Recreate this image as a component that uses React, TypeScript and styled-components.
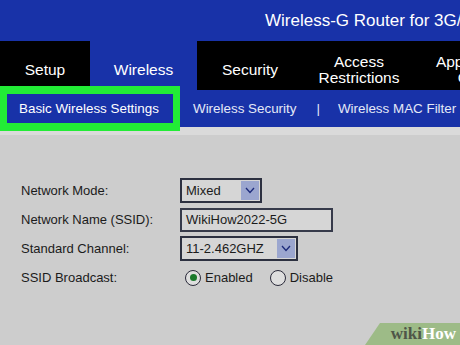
import React from "react";
import styled, { createGlobalStyle } from "styled-components";

const blue = "#1832a8";

const GlobalStyle = createGlobalStyle`
  html, body {
    margin: 0;
    padding: 0;
    background: #cdcdcd;
    overflow: hidden;
  }
  body {
    font-family: "Liberation Sans", Arial, sans-serif;
  }
`;

const Page = styled.div`
  width: 460px;
  height: 345px;
  position: relative;
  overflow: hidden;
  background: #cdcdcd;
`;

const Header = styled.header`
  height: 41px;
  background: ${blue};
  display: flex;
  align-items: center;
  padding-left: 265px;
  color: #ffffff;
  font-size: 17px;
  white-space: nowrap;
`;

const Nav = styled.nav`
  height: 49px;
  background: #000;
  display: flex;
`;

const Tab = styled.div<{ $w: number; $active?: boolean }>`
  flex: 0 0 ${(p) => p.$w}px;
  display: flex;
  align-items: center;
  justify-content: center;
  padding-top: 9px;
  box-sizing: border-box;
  background: ${(p) => (p.$active ? blue : "transparent")};
  color: #ffffff;
  font-size: 15.5px;
  line-height: 16px;
  text-align: center;
  white-space: nowrap;
`;

const SubNav = styled.div`
  height: 37px;
  background: ${blue};
  display: flex;
  align-items: center;
  color: #e4e9f7;
  font-size: 13.4px;
  white-space: nowrap;
`;

const Highlight = styled.div`
  position: relative;
  z-index: 2;
  flex: 0 0 auto;
  width: 180px;
  height: 45px;
  box-sizing: border-box;
  border: 7px solid #22ec36;
  border-top-width: 8px;
  border-bottom-width: 8px;
  background: ${blue};
  display: flex;
  align-items: center;
  padding-left: 12px;
  color: #ffffff;
`;

const SubLink = styled.span<{ $ml: number }>`
  margin-left: ${(p) => p.$ml}px;
`;

const Band = styled.div`
  height: 8px;
  background: #dadada;
`;

const Form = styled.div`
  display: grid;
  grid-template-columns: 159px auto;
  grid-auto-rows: 29px;
  align-items: center;
  padding: 41px 0 0 21px;
  color: #1b1b1b;
  font-size: 13px;
`;

const Label = styled.div``;

const SelectBox = styled.div<{ $w: number; $h: number }>`
  width: ${(p) => p.$w}px;
  height: ${(p) => p.$h}px;
  box-sizing: border-box;
  border: 2px solid #2c3040;
  background: #d6d6d6;
  display: flex;
  align-items: center;
  justify-content: space-between;
  padding: 0 1px 0 4px;
`;

const DropButton = styled.div`
  width: 18px;
  height: 19px;
  background: #9ba6cf;
  display: flex;
  align-items: center;
  justify-content: center;
`;

const TextInput = styled.div`
  width: 153px;
  height: 24px;
  box-sizing: border-box;
  border: 2px solid #363a4a;
  background: #d6d6d6;
  display: flex;
  align-items: center;
  padding-left: 4px;
`;

const RadioGroup = styled.div`
  display: flex;
  align-items: center;
`;

const RadioCircle = styled.span<{ $on?: boolean }>`
  width: 16px;
  height: 16px;
  box-sizing: border-box;
  border: 1.5px solid #2a2a3a;
  border-radius: 50%;
  background: #dedede;
  display: inline-flex;
  align-items: center;
  justify-content: center;
  margin-left: 5px;
  &::after {
    content: "";
    width: 7px;
    height: 7px;
    border-radius: 50%;
    background: ${(p) => (p.$on ? "#1b7a2c" : "transparent")};
  }
`;

const RadioText = styled.span<{ $mr?: number }>`
  margin-left: 4px;
  margin-right: ${(p) => p.$mr || 0}px;
  font-size: 13px;
`;

const Watermark = styled.div`
  position: absolute;
  right: 0;
  bottom: 0;
  width: 95px;
  height: 22px;
  background: #9dbb87;
  clip-path: polygon(15px 0, 100% 0, 100% 100%, 0 100%);
  display: flex;
  align-items: center;
  justify-content: flex-end;
  padding-right: 4px;
  box-sizing: border-box;
  font-family: "Liberation Serif", "DejaVu Serif", serif;
  font-weight: bold;
  font-size: 17px;
`;

const Wiki = styled.span`
  color: #4f5648;
`;

const How = styled.span`
  color: #ffffff;
`;

function Chevron() {
  return (
    <svg width="10" height="7" viewBox="0 0 10 7">
      <polyline points="1,1 5,5.5 9,1" fill="none" stroke="#1c2a7a" strokeWidth="1.3" />
    </svg>
  );
}

function Select(props: { value: string; w: number; h: number }) {
  return (
    <SelectBox $w={props.w} $h={props.h}>
      <span>{props.value}</span>
      <DropButton>
        <Chevron />
      </DropButton>
    </SelectBox>
  );
}

export default function App() {
  return (
    <Page>
      <GlobalStyle />
      <Header>Wireless-G Router for 3G/UMTS Broadband</Header>
      <Nav>
        <Tab $w={90}>Setup</Tab>
        <Tab $w={107} $active>Wireless</Tab>
        <Tab $w={106}>Security</Tab>
        <Tab $w={112}>
          Access
          <br />
          Restrictions
        </Tab>
        <Tab $w={140}>
          Applications &amp;
          <br />
          Gaming
        </Tab>
      </Nav>
      <SubNav>
        <Highlight>Basic Wireless Settings</Highlight>
        <SubLink $ml={13}>Wireless Security</SubLink>
        <SubLink $ml={20}>|</SubLink>
        <SubLink $ml={18}>Wireless MAC Filter</SubLink>
      </SubNav>
      <Band />
      <Form>
        <Label>Network Mode:</Label>
        <Select value="Mixed" w={82} h={25} />
        <Label>Network Name (SSID):</Label>
        <TextInput>WikiHow2022-5G</TextInput>
        <Label>Standard Channel:</Label>
        <Select value="11-2.462GHZ" w={118} h={25} />
        <Label>SSID Broadcast:</Label>
        <RadioGroup>
          <RadioCircle $on />
          <RadioText $mr={12}>Enabled</RadioText>
          <RadioCircle />
          <RadioText>Disable</RadioText>
        </RadioGroup>
      </Form>
      <Watermark>
        <Wiki>wiki</Wiki>
        <How>How</How>
      </Watermark>
    </Page>
  );
}
